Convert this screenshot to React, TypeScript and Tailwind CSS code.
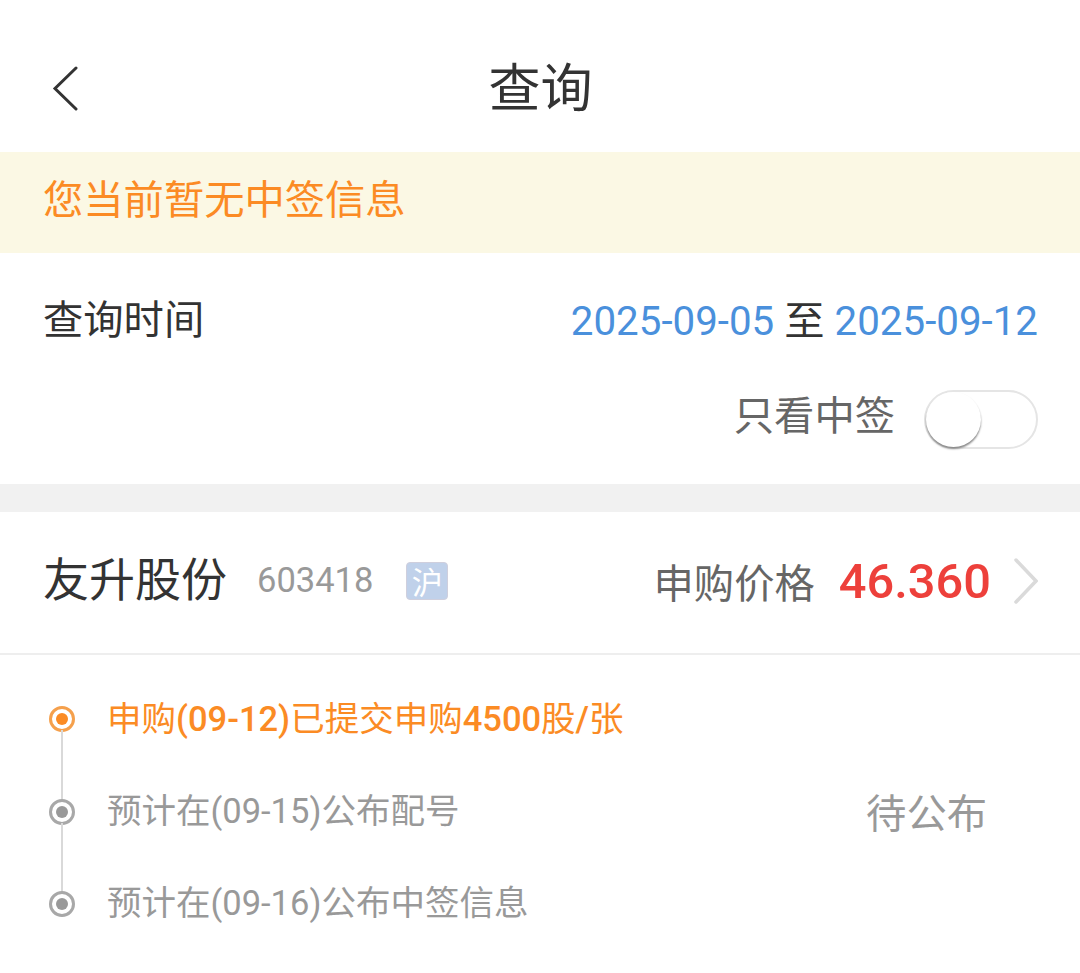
const STEPS = [
  { id: 1, active: true, last: false },
  { id: 2, active: false, last: false },
  { id: 3, active: false, last: true },
];

function Dot({ active }: { active: boolean }) {
  return (
    <span className={`flex h-[26px] w-[26px] items-center justify-center rounded-full border-[3px] bg-white ${active ? "border-[#f5a04c]" : "border-[#a8a8a8]"}`}>
      <span className={`h-3 w-3 rounded-full ${active ? "bg-[#fb8b24]" : "bg-[#999999]"}`} />
    </span>
  );
}

export default function App() {
  return (
    <div className="h-[973px] w-[1080px] overflow-hidden bg-white font-[Roboto,'Noto_Sans_CJK_SC',sans-serif] text-[#333333]">
      {/* Header */}
      <header className="grid h-[152px] grid-cols-[1fr_auto_1fr] items-center pt-[26px]">
        <svg className="ml-[52px] h-[46px] w-[27px]" viewBox="0 0 27 46" fill="none" stroke="#333" strokeWidth="3" strokeLinecap="round">
          <path d="M24 2 3 22.5l21 20.5" />
        </svg>
        <h1 className="pl-px pt-0.5 text-[52px] leading-none">查询</h1>
      </header>

      <div className="flex h-[101px] items-center bg-[#fbf8e4] pb-0.5 pl-[43px] text-[40.3px] text-[#fb8b24]">您当前暂无中签信息</div>

      {/* Filters */}
      <section className="h-[231px] pl-[43px] pr-[42px]">
        <div className="flex h-[137px] items-center justify-between text-[40.3px]">
          <span>查询时间</span>
          <div className="flex gap-2.5">
            <span className="pt-0.5 text-[#4a90dc]">2025-09-05</span>
            <span className="pt-0.5">至</span>
            <span className="pt-0.5 text-[#4a90dc]">2025-09-12</span>
          </div>
        </div>
        <div className="flex justify-end gap-[29px]">
          <span className="pt-px text-[40.3px] leading-[52px] text-[#666666]">只看中签</span>
          <button className="h-[59px] w-[114px] rounded-full border-2 border-[#e5e5e5]">
            <span className="block h-[55px] w-[55px] rounded-full bg-white shadow-[0_2px_2px_#888]" />
          </button>
        </div>
      </section>

      <div className="h-7 bg-[#f1f1f1]" />

      {/* Stock */}
      <section className="flex h-[143px] items-center border-b-2 border-[#eeeeee] pb-1 pl-[43px] pr-[42px]">
        <h2 className="text-[46px]">友升股份</h2>
        <span className="ml-[30px] text-[34.5px] text-[#999999]">603418</span>
        <span className="ml-[33px] flex h-[38px] w-[42px] items-center justify-center rounded border border-[#cfcfdd] bg-[#c0d1ea] pt-2 text-[31px] text-white">沪</span>
        <span className="ml-auto pt-2.5 text-[40.3px] text-[#666666]">申购价格</span>
        <span className="ml-6 pt-0.5 text-[48.8px] font-medium text-[#ed403b]">46.360</span>
        <svg className="ml-[23px] h-[46px] w-6" viewBox="0 0 24 46" fill="none" stroke="#dadada" strokeWidth="3.5" strokeLinecap="round">
          <path d="m2 2 20 21L2 44" />
        </svg>
      </section>

      {/* Progress */}
      <section className="flex pl-[49px] pr-[93px] pt-[18px]">
        <div className="flex flex-col">
          {STEPS.map((step) => (
            <div key={step.id} className="relative flex h-[92.5px] items-center">
              <Dot active={step.active} />
              {!step.last && <span className="absolute left-3 top-[57px] h-[69px] w-0.5 bg-[#d9d9d9]" />}
            </div>
          ))}
        </div>
        <div className="ml-[32px] text-[34.5px] leading-[92px] text-[#999999]">
          <p className="text-[#fb8b24]">
            申购<span className="font-medium">(09-12)</span>已提交申购<span className="font-medium">4500</span>股<span className="font-medium">/</span>张
          </p>
          <p>预计在(09-15)公布配号</p>
          <p>预计在(09-16)公布中签信息</p>
        </div>
        <span className="ml-auto self-center pt-1.5 text-[40.3px] text-[#999999]">待公布</span>
      </section>
    </div>
  );
}
